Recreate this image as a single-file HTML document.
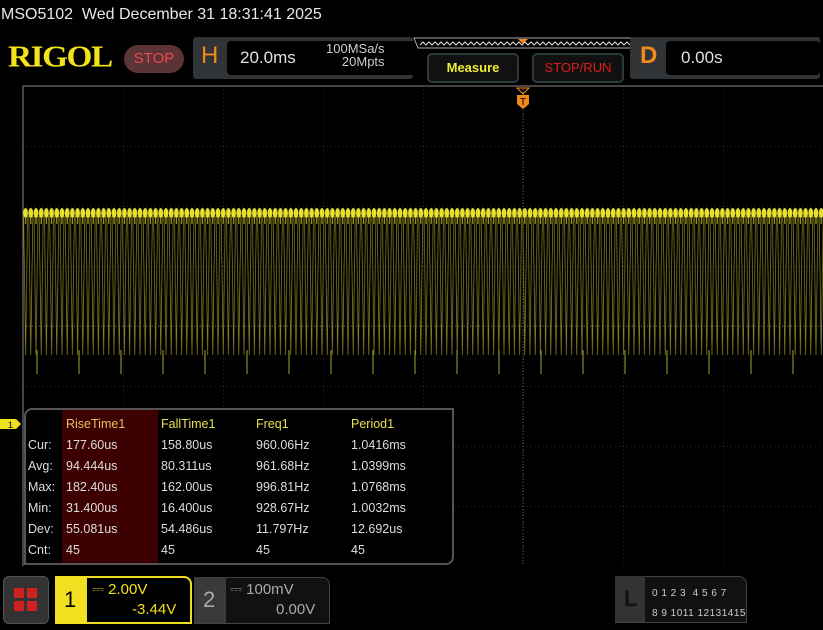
<!DOCTYPE html>
<html><head><meta charset="utf-8"><style>
body{margin:0;width:823px;height:630px;background:#000;overflow:hidden;position:relative;font-family:"Liberation Sans",sans-serif;color:#ddd}
.a{position:absolute;white-space:nowrap}
</style></head><body>
<div class="a" style="left:1px;top:6px;font-size:16px;color:#e8e8e8">MSO5102&nbsp; Wed December 31 18:31:41 2025</div>
<div class="a" style="left:8px;top:39px;font-family:'Liberation Serif',serif;font-weight:bold;font-size:35px;color:#f3e31b;letter-spacing:-1.5px;transform:scale(0.95,0.88);transform-origin:top left">RIGOL</div>
<div class="a" style="left:124px;top:45px;width:60px;height:28px;border-radius:14px;background:#5a3436;color:#f04850;font-size:15px;text-align:center;line-height:28px">STOP</div>
<div class="a" style="left:193px;top:37px;width:220px;height:42px;background:#303436;border-radius:3px"></div>
<div class="a" style="left:201px;top:42px;font-size:24px;color:#f08a1c">H</div>
<div class="a" style="left:227px;top:41px;width:186px;height:34px;background:#000;border-radius:4px 0 0 4px"></div>
<div class="a" style="left:240px;top:48px;font-size:17px;color:#e0e0e0">20.0ms</div>
<div class="a" style="left:326px;top:42px;font-size:13px;color:#ccc;text-align:right;line-height:13px">100MSa/s<br>20Mpts</div>
<svg class="a" style="left:412px;top:36px" width="226" height="14"><path d="M2 2H222L218 12H6Z" fill="none" stroke="#aaa"/><path d="M8 9 l3-3 3 3 3-3 3 3 3-3 3 3 3-3 3 3 3-3 3 3 3-3 3 3 3-3 3 3 3-3 3 3 3-3 3 3 3-3 3 3 3-3 3 3 3-3 3 3 3-3 3 3 3-3 3 3 3-3 3 3 3-3 3 3 3-3 3 3 3-3 3 3 3-3 3 3 3-3 3 3 3-3 3 3 3-3 3 3 3-3 3 3 3-3 3 3 3-3 3 3 3-3 3 3 3-3 3 3 3-3 3 3 3-3 3 3 3-3 3 3 3-3 3 3 3-3 3 3 3-3 3 3 3-3 3 3 3-3 3 3" fill="none" stroke="#ddd"/><path d="M106 3h10l-5 5z" fill="#f08a1c"/></svg>
<div class="a" style="left:427px;top:53px;width:88px;height:26px;background:#111;border:2px solid #2a3a3e;border-radius:5px;color:#f0ee30;font-weight:bold;font-size:13px;text-align:center;line-height:26px">Measure</div>
<div class="a" style="left:532px;top:53px;width:88px;height:26px;background:#111;border:2px solid #2a3a3e;border-radius:5px;color:#e01a1a;font-size:13px;text-align:center;line-height:26px">STOP/RUN</div>
<div class="a" style="left:630px;top:37px;width:190px;height:42px;background:#303436;border-radius:3px"></div>
<div class="a" style="left:640px;top:42px;font-size:24px;color:#f08a1c;font-weight:bold">D</div>
<div class="a" style="left:666px;top:41px;width:154px;height:34px;background:#000;border-radius:4px"></div>
<div class="a" style="left:681px;top:48px;font-size:17px;color:#e0e0e0">0.00s</div>
<svg class="a" style="left:0;top:80px" width="823" height="490">
<defs>
<pattern id="g" x="23" y="6" width="100" height="60" patternUnits="userSpaceOnUse"><path d="M0 0V60M0 0H100" stroke="#555" stroke-dasharray="1 3" fill="none"/></pattern>
<pattern id="w" x="23" y="0" width="5.2" height="490" patternUnits="userSpaceOnUse"><path d="M0.6 136 L2.6 275 L4.6 136" stroke="#8e8a22" stroke-width="0.7" fill="none"/><ellipse cx="2.6" cy="133" rx="2.4" ry="5" fill="#e8e030"/><rect x="2" y="138" width="1.2" height="6" fill="#a8a020"/></pattern>
<pattern id="s" x="35" y="0" width="42" height="490" patternUnits="userSpaceOnUse"><path d="M2 270V294" stroke="#a8a428" stroke-width="1"/></pattern>
</defs>
<rect x="23" y="6" width="800" height="480" fill="url(#g)"/>
<path d="M23 6H823M23 6V486" stroke="#888"/>
<path d="M523 6V486" stroke="#666" stroke-dasharray="1 2"/>
<path d="M23 246H823" stroke="#666" stroke-dasharray="1 2"/>
<rect x="23" y="0" width="800" height="490" fill="url(#w)"/>
<rect x="23" y="0" width="800" height="490" fill="url(#s)"/>
<path d="M517 8h12l-6 6z" fill="none" stroke="#f08a1c"/><path d="M517 15h12v9l-6 5-6-5z" fill="#f08a1c"/><text x="523" y="25" font-size="10" text-anchor="middle" fill="#000">T</text>
<path d="M0 339h16l5 5-5 5H0z" fill="#f0e020"/><text x="8" y="348" font-size="9" fill="#000">1</text>
</svg>
<div class="a" style="left:24px;top:408px;width:426px;height:153px;background:#000;border:2px solid #555;border-radius:8px 0 8px 0"></div>
<div class="a" style="left:62px;top:410px;width:96px;height:153px;background:#3c0000"></div>
<div class="a" style="left:28px;top:414px;font-size:12.5px;line-height:21px;color:#ddd">
<div style="position:absolute;left:0;top:0;width:40px"><br>Cur:<br>Avg:<br>Max:<br>Min:<br>Dev:<br>Cnt:</div>
<div style="position:absolute;left:38px;top:0"><span style="color:#e8c060">RiseTime1</span><br>177.60us<br>94.444us<br>182.40us<br>31.400us<br>55.081us<br>45</div>
<div style="position:absolute;left:133px;top:0"><span style="color:#e8e050">FallTime1</span><br>158.80us<br>80.311us<br>162.00us<br>16.400us<br>54.486us<br>45</div>
<div style="position:absolute;left:228px;top:0"><span style="color:#e8e050">Freq1</span><br>960.06Hz<br>961.68Hz<br>996.81Hz<br>928.67Hz<br>11.797Hz<br>45</div>
<div style="position:absolute;left:323px;top:0"><span style="color:#e8e050">Period1</span><br>1.0416ms<br>1.0399ms<br>1.0768ms<br>1.0032ms<br>12.692us<br>45</div>
</div>
<div class="a" style="left:3px;top:576px;width:44px;height:46px;background:#333;border:1px solid #555;border-radius:6px"></div>
<svg class="a" style="left:14px;top:588px" width="24" height="24"><rect x="0" y="0" width="10" height="10" fill="#d02020"/><rect x="13" y="0" width="10" height="10" fill="#d02020"/><rect x="0" y="13" width="10" height="10" fill="#d02020"/><rect x="13" y="13" width="10" height="10" fill="#d02020"/></svg>
<div class="a" style="left:55px;top:576px;width:133px;height:44px;border:2px solid #f0e020;border-radius:0 8px 0 0;background:#000"></div>
<div class="a" style="left:55px;top:576px;width:32px;height:48px;background:#f0e020"></div>
<div class="a" style="left:64px;top:587px;font-size:22px;color:#000">1</div>
<div class="a" style="left:92px;top:580px;font-size:15px;color:#f0e020;line-height:20px">⎓ 2.00V<br><span style="padding-left:40px">-3.44V</span></div>
<div class="a" style="left:194px;top:577px;width:134px;height:45px;background:#111;border:1px solid #444;border-radius:0 8px 0 0"></div>
<div class="a" style="left:194px;top:577px;width:32px;height:46px;background:#3a3a3a"></div>
<div class="a" style="left:203px;top:587px;font-size:22px;color:#aaa">2</div>
<div class="a" style="left:230px;top:580px;font-size:15px;color:#aaa;line-height:20px">⎓ 100mV<br><span style="padding-left:46px">0.00V</span></div>
<div class="a" style="left:615px;top:576px;width:130px;height:45px;background:#111;border:1px solid #444;border-radius:0 8px 0 0"></div>
<div class="a" style="left:615px;top:576px;width:30px;height:46px;background:#333"></div>
<div class="a" style="left:624px;top:586px;font-size:22px;color:#111;font-weight:bold;-webkit-text-stroke:0.5px #222">L</div>
<div class="a" style="left:652px;top:584px;font-size:10px;color:#ccc;line-height:20px;letter-spacing:0.5px">0 1 2 3 &nbsp;4 5 6 7<br>8 9 1011 12131415</div>
</body></html>
